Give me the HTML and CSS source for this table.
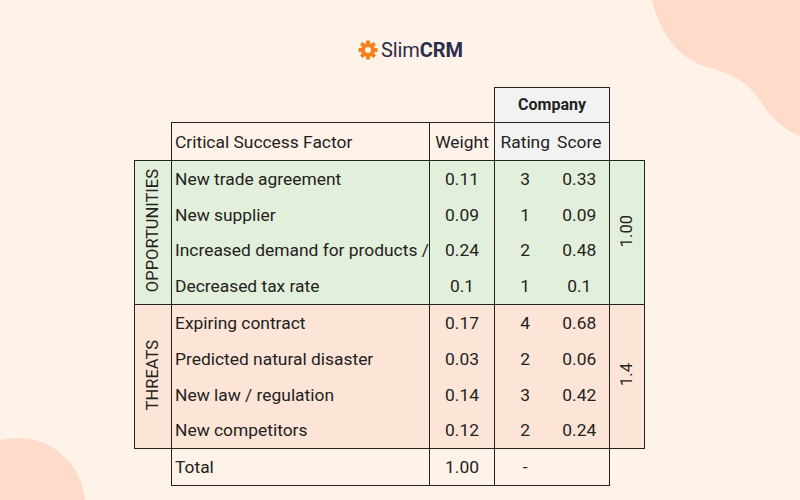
FILE: index.html
```html
<!DOCTYPE html>
<html>
<head>
<meta charset="utf-8">
<link rel="stylesheet" href="styles.css">
</head>
<body>
<svg class="blob blob-tr" width="150" height="140" viewBox="0 0 150 140"><path d="M2 0 C10 35 30 60 60 68 C90 76 100 85 115 108 C125 122 138 132 150 136 L150 0 Z" fill="#ffdbc9"/></svg>
<svg class="blob blob-bl" width="90" height="62" viewBox="0 0 90 62"><circle cx="18" cy="67" r="67" fill="#ffdbc9"/></svg>
<div class="page">
  <div class="logo">
    <svg class="gear" width="20" height="20" viewBox="0 0 20 20">
      <g fill="#f5821f">
        <rect x="8" y="0.5" width="4" height="19" rx="0.6"/>
        <rect x="8" y="0.5" width="4" height="19" rx="0.6" transform="rotate(45 10 10)"/>
        <rect x="8" y="0.5" width="4" height="19" rx="0.6" transform="rotate(90 10 10)"/>
        <rect x="8" y="0.5" width="4" height="19" rx="0.6" transform="rotate(135 10 10)"/>
      </g>
      <circle cx="10" cy="10" r="5" fill="none" stroke="#f5821f" stroke-width="4"/>
      <circle cx="10" cy="10" r="3" fill="#fff2e8"/>
    </svg>
    <span class="brand">Slim<b>CRM</b></span>
  </div>
  <table class="swot">
    <colgroup>
      <col class="c-grp"><col class="c-csf"><col class="c-w"><col class="c-r"><col class="c-s"><col class="c-t">
    </colgroup>
    <thead>
      <tr class="r-company">
        <td class="empty"></td><td class="empty"></td><td class="empty"></td>
        <td colspan="2" class="company">Company</td>
        <td class="empty"></td>
      </tr>
      <tr class="r-head">
        <td class="empty"></td>
        <td class="csf hd">Critical Success Factor</td>
        <td class="num hd">Weight</td>
        <td class="rate grey">Rating</td>
        <td class="score grey">Score</td>
        <td class="empty"></td>
      </tr>
    </thead>
    <tbody class="grp opps">
      <tr>
        <td rowspan="4" class="side"><span class="vert">OPPORTUNITIES</span></td>
        <td class="csf">New trade agreement</td><td class="num">0.11</td><td class="rate">3</td><td class="score">0.33</td>
        <td rowspan="4" class="side"><span class="vert">1.00</span></td>
      </tr>
      <tr><td class="csf">New supplier</td><td class="num">0.09</td><td class="rate">1</td><td class="score">0.09</td></tr>
      <tr><td class="csf">Increased demand for products /</td><td class="num">0.24</td><td class="rate">2</td><td class="score">0.48</td></tr>
      <tr><td class="csf">Decreased tax rate</td><td class="num">0.1</td><td class="rate">1</td><td class="score">0.1</td></tr>
    </tbody>
    <tbody class="grp threats">
      <tr>
        <td rowspan="4" class="side"><span class="vert">THREATS</span></td>
        <td class="csf">Expiring contract</td><td class="num">0.17</td><td class="rate">4</td><td class="score">0.68</td>
        <td rowspan="4" class="side"><span class="vert">1.4</span></td>
      </tr>
      <tr><td class="csf">Predicted natural disaster</td><td class="num">0.03</td><td class="rate">2</td><td class="score">0.06</td></tr>
      <tr><td class="csf">New law / regulation</td><td class="num">0.14</td><td class="rate">3</td><td class="score">0.42</td></tr>
      <tr><td class="csf">New competitors</td><td class="num">0.12</td><td class="rate">2</td><td class="score">0.24</td></tr>
    </tbody>
    <tbody>
      <tr class="r-total">
        <td class="empty"></td>
        <td class="csf">Total</td><td class="num">1.00</td><td class="rate">-</td><td class="score"></td>
        <td class="empty"></td>
      </tr>
    </tbody>
  </table>
</div>
</body>
</html>
```
FILE: styles.css
```css
html, body {
  margin: 0;
  padding: 0;
}
body {
  width: 800px;
  height: 500px;
  overflow: hidden;
  background: #fff2e8;
  position: relative;
  font-family: Roboto, "Liberation Sans", sans-serif;
  color: #222;
}
.blob {
  position: absolute;
  display: block;
}
.blob-tr { top: 0; right: 0; }
.blob-bl { left: 0; bottom: 0; }
.page {
  position: relative;
  display: flex;
  flex-direction: column;
  padding: 39px 0 0 134px;
}
.logo {
  display: flex;
  align-items: center;
  gap: 3px;
  margin-left: 224px;
  height: 22px;
}
.gear { display: block; }
.brand {
  font-size: 20px;
  color: #2b2c4c;
  letter-spacing: -0.1px;
}
.brand b { font-weight: 700; }
.swot {
  margin-top: 26px;
  border-collapse: collapse;
  table-layout: fixed;
  width: 510px;
  font-size: 17.4px;
}
.c-grp { width: 37px; }
.c-csf { width: 258px; }
.c-w { width: 65px; }
.c-r { width: 57px; }
.c-s { width: 58px; }
.c-t { width: 35px; }
.swot td {
  padding: 0;
  height: 36px;
  white-space: nowrap;
  line-height: 20px;
}
.swot .r-company td { height: 34px; }
.swot .r-head td { height: 37px; }
.swot .grp td { height: 35.8px; }
.swot td.empty { border: none; }
.company {
  font-weight: 700;
  font-size: 16px;
  text-align: center;
  background: #f2f2f2;
  border: 1px solid #222;
}
.r-head td.hd, .r-head td.grey { border-top: 1px solid #222; }
.grey { background: #f2f2f2; }
.csf {
  padding-left: 3px !important;
  border-left: 1px solid #222;
  border-right: 1px solid #222;
  overflow: hidden;
}
.num {
  text-align: center;
  border-right: 1px solid #222;
}
.rate {
  text-align: center;
  padding-left: 4px !important;
}
.score {
  text-align: center;
  border-right: 1px solid #222;
  padding-right: 2px !important;
}
.grp { border: 1px solid #222; }
.opps td { background: #e2efda; }
.threats td { background: #fce4d6; }
.side {
  border: 1px solid #222;
  text-align: center;
  vertical-align: middle;
}
.vert {
  display: inline-block;
  writing-mode: vertical-rl;
  transform: rotate(180deg);
  font-size: 16.5px;
  line-height: 20px;
}
.r-total td.csf, .r-total td.num, .r-total td.rate, .r-total td.score {
  border-bottom: 1px solid #222;
}
```
